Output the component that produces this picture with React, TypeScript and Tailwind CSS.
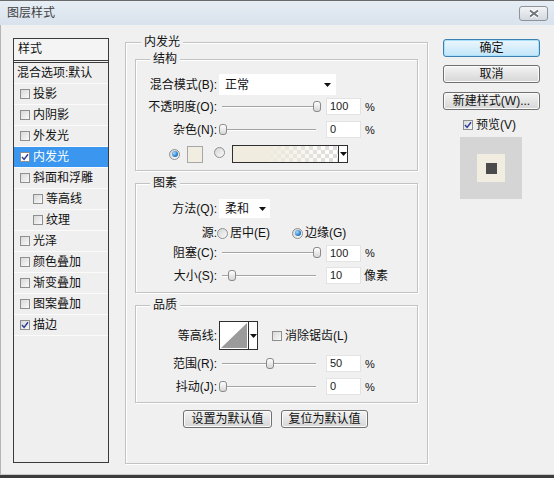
import React from 'react';

function Check({ checked = false, className = '' }: { checked?: boolean; className?: string }) {
  return (
    <span
      className={`inline-flex h-[10px] w-[10px] shrink-0 items-center justify-center border border-[#8e8f8f] bg-linear-to-br from-[#d9d9d9] to-[#f9f9f9] ${className}`}
    >
      {checked && (
        <svg width="8" height="8" viewBox="0 0 8 8" className="block">
          <path d="M1 4.1 L3.1 6.4 L7 1.3" fill="none" stroke="#2b3f9b" strokeWidth="1.5" />
        </svg>
      )}
    </span>
  );
}

function Radio({ on = false }: { on?: boolean }) {
  return (
    <span className="inline-flex h-[11px] w-[11px] shrink-0 items-center justify-center rounded-full border border-[#8e8f8f] bg-linear-to-br from-[#d4d4d4] to-[#fbfbfb]">
      {on && <span className="h-[6px] w-[6px] rounded-full bg-[radial-gradient(circle_at_35%_35%,#a8dcff,#1a6fc0_70%)]" />}
    </span>
  );
}

function Arrow() {
  return (
    <svg width="7" height="4" viewBox="0 0 7 4" className="block">
      <polygon points="0,0 7,0 3.5,4" fill="#111" />
    </svg>
  );
}

// pos: thumb offset in px, 0..94
function Slider({ pos }: { pos: number }) {
  return (
    <div className="relative ml-[2px] h-[12px] w-[102px] shrink-0">
      <div className="absolute left-[3px] right-[5px] top-[5px] h-[2px] border-t border-[#a3a3a3] bg-white" />
      <div
        className="absolute top-0 h-[11px] w-[8px] rounded-[3px] border border-[#8a8a8a] bg-linear-to-b from-white to-[#d6d6d6]"
        style={{ left: pos }}
      />
    </div>
  );
}

function Num({ v }: { v: string }) {
  return (
    <div className="ml-[5px] h-[17px] w-[35px] shrink-0 border border-[#e3e3e3] bg-white pl-[3px] text-[11px] leading-[15px] text-[#1a1a1a]">
      {v}
    </div>
  );
}

function Label({ children }: { children: React.ReactNode }) {
  return <span className="w-[81px] shrink-0 text-right">{children}</span>;
}

function Group({ title, className = '', children }: { title: string; className?: string; children: React.ReactNode }) {
  return (
    <div
      className={`relative w-[283px] border border-[#c3c3c3] shadow-[inset_1px_1px_0_#fff,1px_1px_0_#fff] ${className}`}
    >
      <span className="absolute left-[14px] top-[-8px] bg-[#f0f0f0] px-[3px] leading-[14px]">{title}</span>
      {children}
    </div>
  );
}

function Btn({ children, primary = false, className = '' }: { children: React.ReactNode; primary?: boolean; className?: string }) {
  return (
    <div
      className={`flex h-[18px] items-center justify-center rounded-[3px] border leading-none ${
        primary
          ? 'border-[#3c7fb1] bg-linear-to-b from-[#ecf7fd] to-[#c2e5f9] shadow-[inset_0_0_0_1px_#a9e0fb]'
          : 'border-[#707070] bg-linear-to-b from-[#f4f4f4] to-[#d6d6d6] shadow-[inset_0_0_0_1px_#fbfbfb]'
      } ${className}`}
    >
      {children}
    </div>
  );
}

const styles = [
  { name: '投影' },
  { name: '内阴影' },
  { name: '外发光' },
  { name: '内发光', checked: true, selected: true },
  { name: '斜面和浮雕' },
  { name: '等高线', sub: true },
  { name: '纹理', sub: true },
  { name: '光泽' },
  { name: '颜色叠加' },
  { name: '渐变叠加' },
  { name: '图案叠加' },
  { name: '描边', checked: true },
];

export default function App() {
  return (
    <div className="flex h-[478px] w-[554px] flex-col overflow-hidden border-t border-[#6a6a6a] bg-[#f0f0f0] font-['Liberation_Sans','Noto_Sans_CJK_SC',sans-serif] text-[12px] leading-[14px] text-[#111]">
      {/* title bar */}
      <div className="flex h-[24px] shrink-0 items-center justify-between bg-linear-to-b from-[#e6edf4] to-[#d9e3ed] pl-[7px] pr-[6px]">
        <span className="text-[#404040]">图层样式</span>
        <div className="mt-[1px] flex h-[15px] w-[29px] items-center justify-center rounded-[3px] border border-[#8d9399] bg-linear-to-b from-[#f2f4f6] to-[#d3d9df]">
          <svg width="12" height="9" viewBox="0 0 12 9" className="block">
            <path d="M2 1.5 L10 7.5 M10 1.5 L2 7.5" stroke="#ffffff" strokeWidth="4" />
            <path d="M2 1.5 L10 7.5 M10 1.5 L2 7.5" stroke="#6f757b" strokeWidth="2" />
          </svg>
        </div>
      </div>

      {/* body */}
      <div className="flex flex-1 items-start border-l border-[#b4b4b4] pl-[12px]">
        {/* style list */}
        <div className="mt-[13px] h-[425px] w-[96px] shrink-0 border border-[#3b3b3b] bg-[#efefef]">
          <div className="flex h-[24px] items-center border-b-[3px] border-double border-[#3b3b3b] bg-[#f4f4f4] pb-[1px] pl-[4px]">
            样式
          </div>
          <div className="flex h-[21px] items-center border-b border-[#fbfbfb] pl-[3px]">混合选项:默认</div>
          {styles.map((s) => (
            <div
              key={s.name}
              className={`flex h-[21px] items-center gap-[3px] border-b border-[#fbfbfb] ${s.sub ? 'pl-[19px]' : 'pl-[6px]'} ${
                s.selected ? 'bg-[#3a96ee] text-white' : ''
              }`}
            >
              <Check checked={s.checked} className={s.selected ? 'bg-white from-white to-white' : ''} />
              <span>{s.name}</span>
            </div>
          ))}
        </div>

        {/* main group */}
        <div className="relative ml-[16px] mt-[17px] h-[422px] w-[303px] shrink-0 border border-[#c3c3c3] pl-[9px] pt-[16px] shadow-[inset_1px_1px_0_#fff,1px_1px_0_#fff]">
          <span className="absolute left-[15px] top-[-8px] bg-[#f0f0f0] px-[3px] leading-[14px]">内发光</span>

          <Group title="结构" className="h-[112px] pt-[14px]">
            <div className="flex h-[21px] items-center">
              <Label>混合模式(B):</Label>
              <div className="ml-[2px] flex h-[21px] w-[117px] items-center justify-between bg-white pl-[6px] pr-[5px]">
                <span>正常</span>
                <Arrow />
              </div>
            </div>
            <div className="mt-[3px] flex h-[17px] items-center">
              <Label>不透明度(O):</Label>
              <Slider pos={94} />
              <Num v="100" />
              <span className="ml-[4px] text-[11px]">%</span>
            </div>
            <div className="mt-[6px] flex h-[17px] items-center">
              <Label>杂色(N):</Label>
              <Slider pos={0} />
              <Num v="0" />
              <span className="ml-[4px] text-[11px]">%</span>
            </div>
            <div className="mt-[7px] flex h-[18px] items-center pl-[33px]">
              <Radio on />
              <div className="ml-[7px] h-[17px] w-[16px] border border-[#a7a7a7] bg-[#f1ede1]" />
              <div className="ml-[11px]">
                <Radio />
              </div>
              <div className="ml-[7px] flex h-[18px] w-[116px] border border-[#2f2f2f] bg-[repeating-conic-gradient(#dcdcdc_0_25%,#ffffff_0_50%)] bg-[length:8px_8px]">
                <div className="flex-1 bg-linear-to-r from-[#f0ecdf] from-30% to-[#f0ecdf00]" />
                <div className="flex w-[9px] items-center justify-center border-l border-[#2f2f2f] bg-white">
                  <Arrow />
                </div>
              </div>
            </div>
          </Group>

          <Group title="图素" className="mt-[12px] h-[110px] pt-[15px]">
            <div className="flex h-[19px] items-center">
              <Label>方法(Q):</Label>
              <div className="ml-[2px] flex h-[19px] w-[51px] items-center justify-between bg-white pl-[6px] pr-[4px]">
                <span>柔和</span>
                <Arrow />
              </div>
            </div>
            <div className="mt-[4px] flex h-[22px] items-center">
              <Label>源:</Label>
              <div className="flex w-[75px] items-center">
                <Radio />
                <span className="ml-[2px]">居中(E)</span>
              </div>
              <Radio on />
              <span className="ml-[2px]">边缘(G)</span>
            </div>
            <div className="flex h-[18px] items-center">
              <Label>阻塞(C):</Label>
              <Slider pos={94} />
              <Num v="100" />
              <span className="ml-[4px] text-[11px]">%</span>
            </div>
            <div className="mt-[5px] flex h-[17px] items-center">
              <Label>大小(S):</Label>
              <Slider pos={9} />
              <Num v="10" />
              <span className="ml-[3px]">像素</span>
            </div>
          </Group>

          <Group title="品质" className="mt-[12px] h-[98px] pt-[15px]">
            <div className="flex h-[29px] items-center">
              <Label>等高线:</Label>
              <div className="ml-[2px] flex h-[29px] w-[39px] border border-[#2f2f2f] bg-white">
                <svg width="28" height="27" viewBox="0 0 28 27" className="block">
                  <polygon points="1,26 27,1 27,26" fill="#9b9b9b" />
                </svg>
                <div className="flex flex-1 items-center justify-center border-l border-[#2f2f2f]">
                  <Arrow />
                </div>
              </div>
              <Check className="ml-[14px]" />
              <span className="ml-[3px]">消除锯齿(L)</span>
            </div>
            <div className="mt-[5px] flex h-[17px] items-center">
              <Label>范围(R):</Label>
              <Slider pos={47} />
              <Num v="50" />
              <span className="ml-[4px] text-[11px]">%</span>
            </div>
            <div className="mt-[6px] flex h-[17px] items-center">
              <Label>抖动(J):</Label>
              <Slider pos={0} />
              <Num v="0" />
              <span className="ml-[4px] text-[11px]">%</span>
            </div>
          </Group>

          <div className="ml-[48px] mt-[7px] flex gap-[9px]">
            <Btn className="w-[89px]">设置为默认值</Btn>
            <Btn className="w-[87px]">复位为默认值</Btn>
          </div>
        </div>

        {/* right column */}
        <div className="ml-[15px] mt-[14px] flex w-[97px] shrink-0 flex-col">
          <Btn primary>确定</Btn>
          <Btn className="mt-[8px]">取消</Btn>
          <Btn className="mt-[9px]">新建样式(W)...</Btn>
          <div className="mt-[8px] flex h-[14px] items-center pl-[20px]">
            <Check checked />
            <span className="ml-[3px]">预览(V)</span>
          </div>
          <div className="ml-[17px] mt-[5px] flex h-[62px] w-[62px] items-center justify-center bg-[#d5d5d5]">
            <div className="flex h-[28px] w-[28px] items-center justify-center bg-[#f2ede1]">
              <div className="h-[11px] w-[11px] bg-[#4b4b4b]" />
            </div>
          </div>
        </div>
      </div>

      <div className="h-[4px] shrink-0 border-t border-[#c9c9c9] bg-[#3c3c3c]" />
    </div>
  );
}
